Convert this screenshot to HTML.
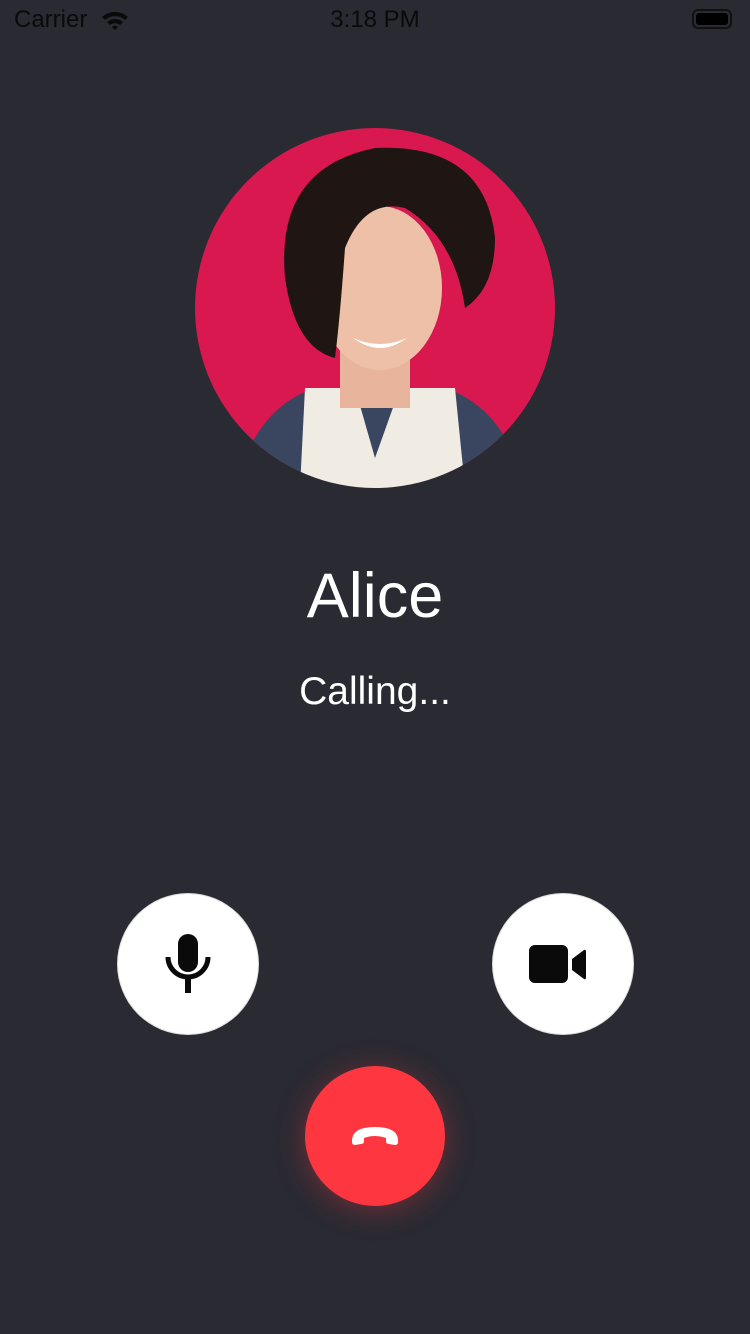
<!DOCTYPE html>
<html><head><meta charset="utf-8"><style>
body{margin:0;width:750px;height:1334px;background:#292a32;position:relative;overflow:hidden;font-family:"Liberation Sans",sans-serif}
.sb{position:absolute;top:6px;font-size:24px;color:#0a0a0a}
.btn{position:absolute;width:140px;height:140px;border-radius:50%;background:#fff;box-shadow:0 0 0 1px #ddd}
</style></head><body>
<div class="sb" style="left:14px">Carrier</div>
<svg style="position:absolute;left:100px;top:9px" width="30" height="22" viewBox="0 0 30 22"><path d="M2 8 A19 19 0 0 1 28 8 L25 11 A15 15 0 0 0 5 11Z M7 13 A12 12 0 0 1 23 13 L20 16 A8 8 0 0 0 10 16Z M12 18 A4 4 0 0 1 18 18 L15 21Z" fill="#0a0a0a"/></svg>
<div class="sb" style="left:0;width:750px;text-align:center">3:18 PM</div>
<div style="position:absolute;left:692px;top:9px;width:40px;height:20px;border:2px solid #111;border-radius:6px;box-sizing:border-box;padding:2px"><div style="background:#000;height:100%;border-radius:3px"></div></div>
<svg style="position:absolute;left:195px;top:128px" width="360" height="360" viewBox="0 0 360 360">
<defs><clipPath id="c"><circle cx="180" cy="180" r="180"/></clipPath></defs>
<g clip-path="url(#c)">
<rect width="360" height="360" fill="#d9184f"/>
<path d="M40 360 Q60 280 120 260 L250 260 Q310 280 330 360Z" fill="#3a4660"/>
<path d="M105 360 L110 260 L160 260 L180 330 L205 260 L260 260 L270 360Z" fill="#f0ece4"/>
<rect x="145" y="180" width="70" height="100" fill="#e8b49c"/>
<ellipse cx="185" cy="160" rx="62" ry="82" fill="#eec0a8"/>
<path d="M90 150 Q80 40 180 20 Q290 15 300 110 Q300 160 270 180 Q260 110 210 80 Q170 70 150 120 Q145 190 140 230 Q100 220 90 150Z" fill="#1f1512"/>
<path d="M158 210 Q185 230 212 210 Q185 222 158 210Z" fill="#fff"/>
</g></svg>
<div style="position:absolute;top:560px;width:750px;text-align:center;color:#fff;font-size:63px">Alice</div>
<div style="position:absolute;top:670px;width:750px;text-align:center;color:#fff;font-size:39px">Calling...</div>
<div class="btn" style="left:118px;top:894px"></div>
<svg style="position:absolute;left:160px;top:930px" width="56" height="70" viewBox="0 0 56 70"><rect x="18" y="4" width="20" height="38" rx="10" fill="#0a0a0a"/><path d="M8 27 A20 20 0 0 0 48 27" stroke="#0a0a0a" stroke-width="5" fill="none"/><rect x="25" y="46" width="6" height="17" fill="#0a0a0a"/></svg>
<div class="btn" style="left:493px;top:894px"></div>
<svg style="position:absolute;left:529px;top:945px" width="60" height="40" viewBox="0 0 60 40"><rect x="0" y="0" width="39" height="38" rx="6" fill="#0a0a0a"/><path d="M43 14 L55 5 Q57 4 57 7 L57 32 Q57 35 55 34 L43 25Z" fill="#0a0a0a"/></svg>
<div style="position:absolute;left:305px;top:1066px;width:140px;height:140px;border-radius:50%;background:#fd3640;box-shadow:0 4px 30px rgba(253,54,64,.35)"></div>
<svg style="position:absolute;left:349px;top:1122px" width="52" height="30" viewBox="0 0 52 30"><path d="M3 20 Q2 5 26 5 Q50 5 49 20 Q49 23 46 23 L40 22 Q37 22 37 19 L37 16 Q26 12 15 16 L15 19 Q15 22 12 22 L6 23 Q3 23 3 20Z" fill="#fff"/></svg>
</body></html>
